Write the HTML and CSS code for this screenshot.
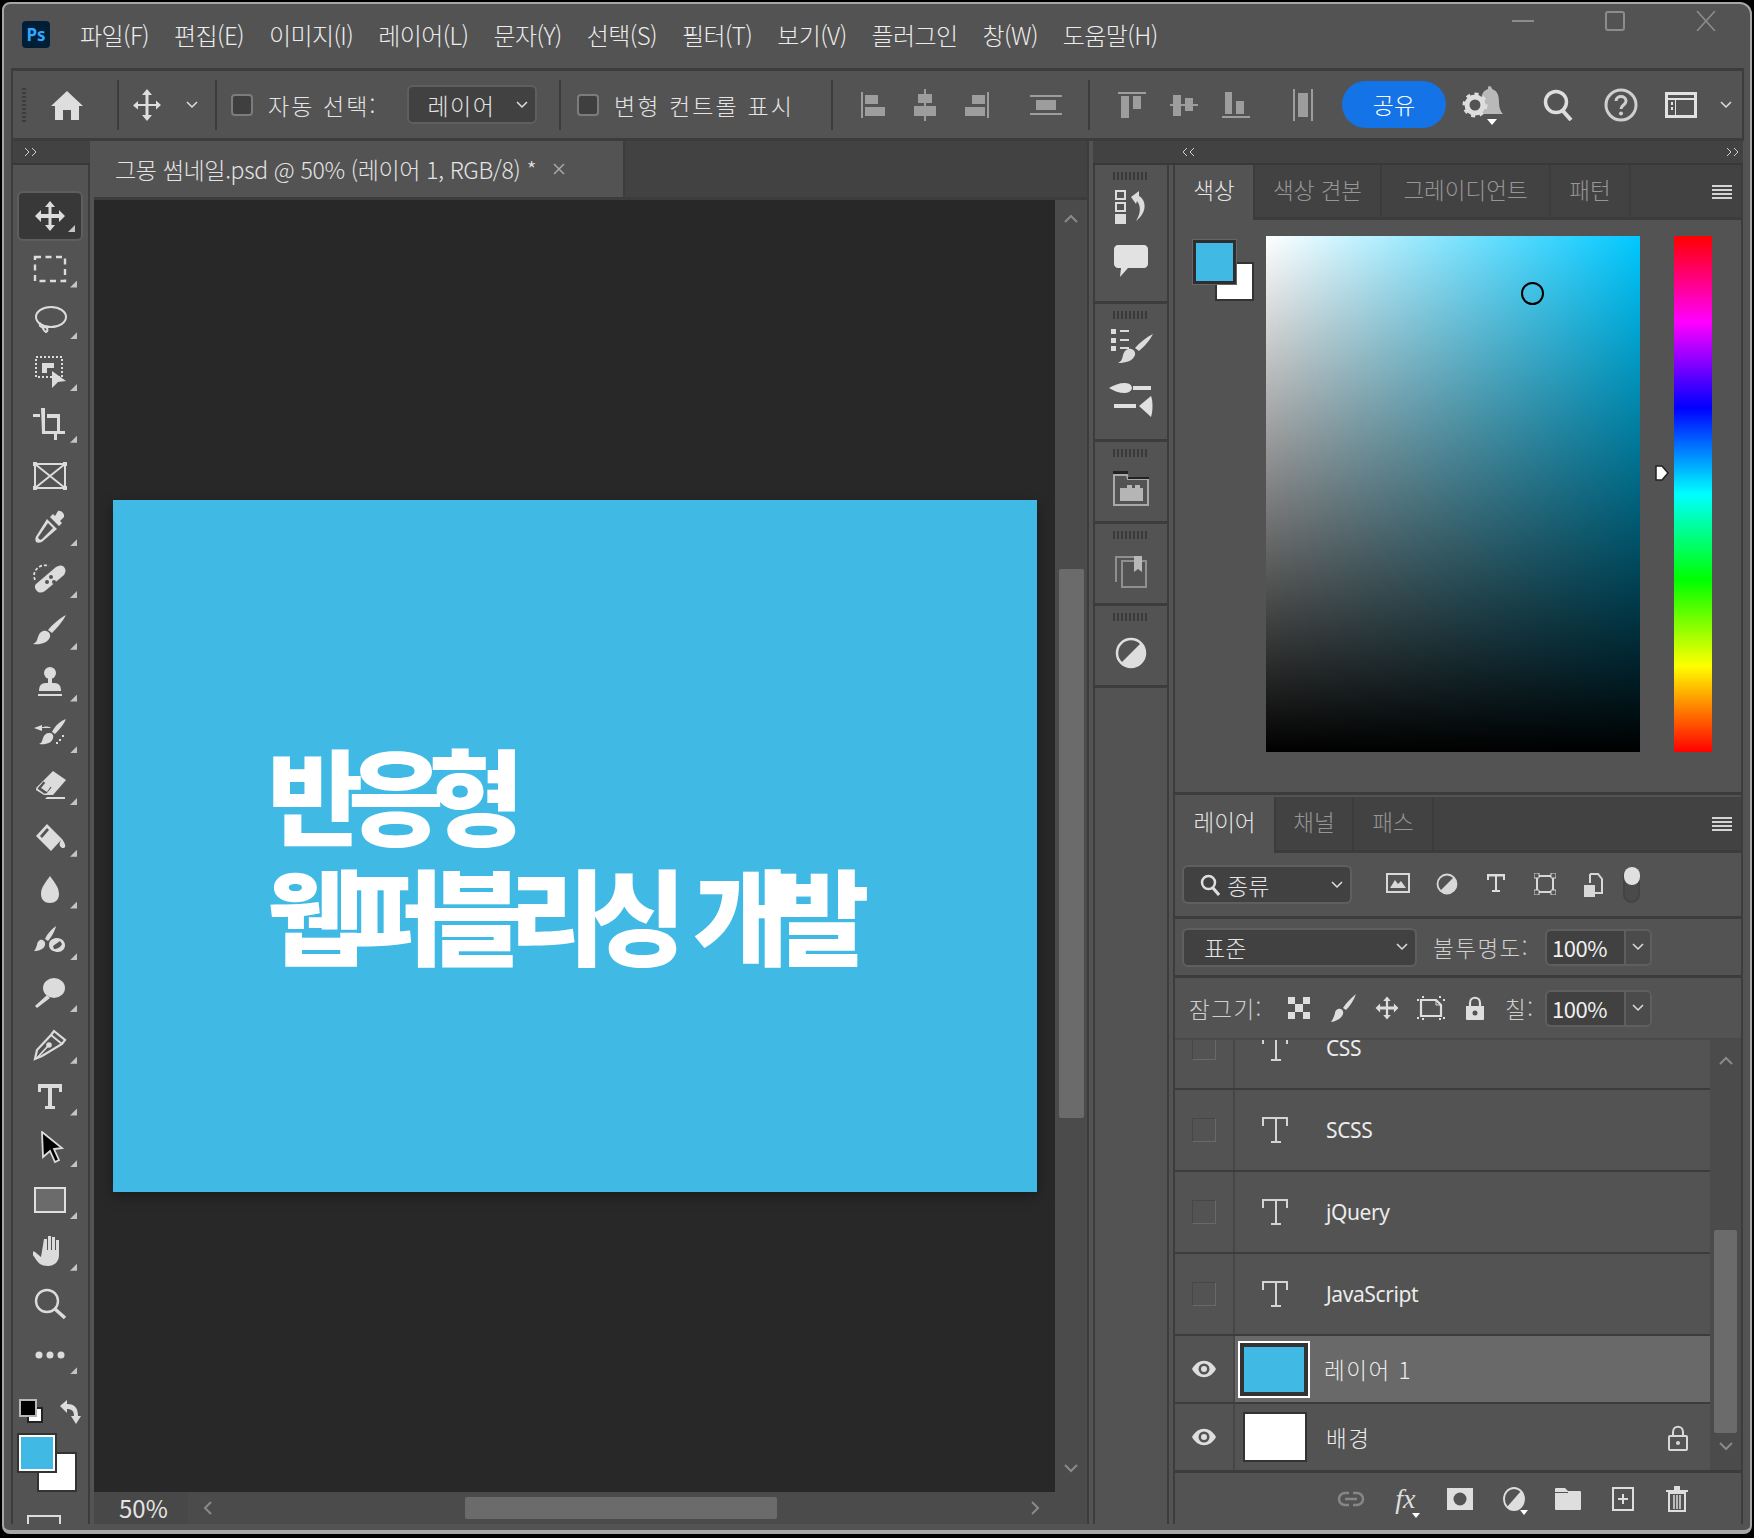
FILE: index.html
```html
<!DOCTYPE html>
<html lang="ko">
<head>
<meta charset="utf-8">
<title>Photoshop</title>
<link rel="stylesheet" href="styles.css">
</head>
<body>
<div class="window">
  <header class="titlebar">
    <div class="ps-logo">Ps</div>
    <nav class="menu">
      <span>파일(F)</span><span>편집(E)</span><span>이미지(I)</span><span>레이어(L)</span><span>문자(Y)</span><span>선택(S)</span><span>필터(T)</span><span>보기(V)</span><span>플러그인</span><span>창(W)</span><span>도움말(H)</span>
    </nav>
    <div class="winctl">
      <svg class="wc-min" width="22" height="4" viewBox="0 0 22 4"><path d="M0 2h22" stroke="#8c8c8c" stroke-width="2"/></svg>
      <svg class="wc-max" width="20" height="20" viewBox="0 0 20 20"><rect x="1" y="1" width="18" height="18" rx="2" fill="none" stroke="#8c8c8c" stroke-width="2"/></svg>
      <svg class="wc-close" width="20" height="20" viewBox="0 0 20 20"><path d="M1 0l18 20M19 0L1 20" stroke="#8c8c8c" stroke-width="1.6"/></svg>
    </div>
  </header>

  <section class="toolbar">
    <div class="tb-home">
      <div class="tb-grip"></div>
      <svg width="34" height="30" viewBox="0 0 34 30"><path d="M17 1L33 16h-4v14h-8v-10h-8v10H5V16H1z" fill="#dedede"/></svg>
    </div>
    <i class="sep"></i>
    <div class="tb-move">
      <svg width="30" height="34" viewBox="0 0 30 34"><path d="M15 1l5 6h-3.5v9H24v-3.5l5 4.500-5 4.500V18h-7.500v9H20l-5 6-5-6h3.500v-9H6v3.500L1 17.500l5-4.500V16h7.500V7H10z" fill="#dedede"/></svg>
      <svg class="chev" width="12" height="8" viewBox="0 0 12 8"><path d="M1 1l5 5 5-5" fill="none" stroke="#dedede" stroke-width="1.500"/></svg>
    </div>
    <i class="sep"></i>
    <div class="tb-auto">
      <i class="check"></i>
      <span class="tb-label">자동 선택:</span>
      <div class="select tb-select"><span>레이어</span><svg class="chev" width="12" height="8" viewBox="0 0 12 8"><path d="M1 1l5 5 5-5" fill="none" stroke="#dedede" stroke-width="1.500"/></svg></div>
    </div>
    <i class="sep"></i>
    <div class="tb-trans">
      <i class="check"></i>
      <span class="tb-label">변형 컨트롤 표시</span>
    </div>
    <i class="sep"></i>
    <div class="tb-aligns">
      <div class="ic"><svg width="26" height="26" viewBox="0 0 26 26" fill="#9d9d9d"><path d="M1 0h2v26H1z"/><path d="M5 3h13v9H5zM5 15h20v9H5z"/></svg></div>
      <div class="ic"><svg width="22" height="32" viewBox="0 0 22 32" fill="#9d9d9d"><path d="M10 0h2v32h-2z"/><path d="M4 5h14v9H4zM0 17h22v10H0z"/></svg></div>
      <div class="ic"><svg width="26" height="26" viewBox="0 0 26 26" fill="#9d9d9d"><path d="M23 0h2v26h-2z"/><path d="M8 3h13v9H8zM1 15h20v9H1z"/></svg></div>
      <div class="ic ic-far"><svg width="34" height="20" viewBox="0 0 34 20" fill="#9d9d9d"><path d="M1 0h32v2H1zM1 18h32v2H1zM7 5h20v10H7z"/></svg></div>
    </div>
    <i class="sep"></i>
    <div class="tb-dist">
      <div class="ic"><svg width="28" height="26" viewBox="0 0 28 26" fill="#9d9d9d"><path d="M0 0h28v2H0zM3 4h8v22H3zM15 4h8v13h-8z"/></svg></div>
      <div class="ic"><svg width="28" height="22" viewBox="0 0 28 22" fill="#9d9d9d"><path d="M0 10h28v2H0zM3 1h8v21H3zM15 4h8v13h-8z"/></svg></div>
      <div class="ic"><svg width="28" height="26" viewBox="0 0 28 26" fill="#9d9d9d"><path d="M0 24h28v2H0zM3 0h7v22H3zM14 9h8v13h-8z"/></svg></div>
      <div class="ic ic-far"><svg width="20" height="32" viewBox="0 0 20 32" fill="#9d9d9d"><path d="M0 0h2v32H0zM18 0h2v32h-2zM5 4h10v24H5z"/></svg></div>
    </div>
    <button class="share">공유</button>
    <div class="ic ic-bell">
      <svg width="44" height="40" viewBox="0 0 44 40"><path d="M27 1c2 0 3 2 3 3 6 2 7 7 7 14 0 5 2 9 4 11H15c2-2 4-6 4-11 0-7 1-12 7-14 0-1 0-3 1-3z" fill="#b9b9b9"/><circle cx="13" cy="20" r="8" fill="none" stroke="#dedede" stroke-width="5"/><circle cx="13" cy="20" r="11" fill="none" stroke="#dedede" stroke-width="3" stroke-dasharray="4 4.500"/><path d="M25 34h10l-5 6z" fill="#fff"/></svg>
    </div>
    <div class="ic ic-search"><svg width="30" height="32" viewBox="0 0 30 32"><circle cx="13" cy="13" r="10.500" fill="none" stroke="#dedede" stroke-width="3.500"/><path d="M20 22l8 9" stroke="#dedede" stroke-width="4"/></svg></div>
    <div class="ic ic-help"><svg width="34" height="34" viewBox="0 0 34 34"><circle cx="17" cy="17" r="15" fill="none" stroke="#cfcfcf" stroke-width="3"/><path d="M12 13c0-6 10-6 10 0 0 4-5 4-5 8" fill="none" stroke="#cfcfcf" stroke-width="3"/><circle cx="17" cy="25.500" r="2" fill="#cfcfcf"/></svg></div>
    <div class="ic ic-work"><svg width="32" height="26" viewBox="0 0 32 26"><rect x="1.500" y="1.500" width="29" height="23" fill="none" stroke="#e2e2e2" stroke-width="3"/><path d="M1 6h30v2H1zM6 10h2v3H6zM6 15h2v3H6z" fill="#e2e2e2"/><path d="M10 8h1v15h-1z" fill="#e2e2e2"/></svg></div>
    <div class="ic ic-wchev"><svg width="12" height="8" viewBox="0 0 12 8"><path d="M1 1l5 5 5-5" fill="none" stroke="#dedede" stroke-width="1.500"/></svg></div>
  </section>

  <div class="main">
    <aside class="left">
      <div class="collapse"><svg width="14" height="10" viewBox="0 0 14 10"><path d="M1 1l4 4-4 4M8 1l4 4-4 4" fill="none" stroke="#cfcfcf"/></svg></div>
      <div class="tools">
        <div class="grip"></div>
        <div class="toolgrid">
          <div class="tool tool-on more"><svg viewBox="0 0 34 34"><path d="M17 2l5 6h-3.500v7H26v-4l6 6-6 6v-4h-7.500v7H22l-5 6-5-6h3.500v-7H8v4l-6-6 6-6v4h7.500V8H12z"/></svg></div>
          <div class="tool more"><svg viewBox="0 0 34 34"><rect x="2" y="5" width="30" height="24" fill="none" stroke="currentColor" stroke-width="2.400" stroke-dasharray="6 4.500"/></svg></div>
          <div class="tool more"><svg viewBox="0 0 34 34" class="line"><ellipse cx="18" cy="14" rx="15" ry="10"/><path d="M8 20c-4 3 2 5 5 4 2 2 2 4 0 5-2-1-4-4-3-6"/></svg></div>
          <div class="tool more"><svg viewBox="0 0 34 34"><rect x="3" y="2" width="26" height="20" fill="none" stroke="currentColor" stroke-width="2" stroke-dasharray="2 2"/><path d="M9 8h12v5H14v5H9z"/><path d="M19 16l14 10-8 1-6 6z"/></svg></div>
          <div class="tool more"><svg viewBox="0 0 34 34"><path d="M8 1h4v23h20v3h-8v6h-3v-6H9zM0 7h7v3H0zM14 7h13v17h-3V11H14z" /></svg></div>
          <div class="tool"><svg viewBox="0 0 34 34" class="line"><rect x="2" y="5" width="30" height="24"/><path d="M2 5l30 24M32 5L2 29"/><path class="dots" d="M0 3h4v4H0zM30 3h4v4h-4zM0 27h4v4H0zM30 27h4v4h-4z"/></svg></div>
          <div class="tool more"><svg viewBox="0 0 34 34"><path d="M25 1c3-1 7 3 6 6l-4 4 2 2-3 3-9-9 3-3 2 2z"/><path d="M14 9l10 10L10 31c-2 2-5 2-7 1-1-2-1-5 1-7zM15 13L6 26c-1 1-1 2 0 3 1 1 2 1 3 0l11-11z" fill-rule="evenodd"/></svg></div>
          <div class="tool more"><svg viewBox="0 0 34 34"><path d="M3 22L23 5c3-2 6-2 8 0s2 5 0 8L12 29c-3 2-6 2-8 0s-3-5-1-7z"/><circle cx="18" cy="15" r="2" fill="#535353"/><circle cx="14" cy="20" r="2" fill="#535353"/><circle cx="21" cy="20" r="2" fill="#535353"/><path d="M2 18C-2 8 8 1 16 4" fill="none" stroke="currentColor" stroke-width="1.800" stroke-dasharray="3 2"/></svg></div>
          <div class="tool more"><svg viewBox="0 0 34 34"><path d="M33 1c-3 6-9 13-14 18l-4-3C20 10 27 4 33 1zM10 17c4-1 8 2 7 6-2 6-10 8-17 7 4-2 4-4 5-7 1-3 2-5 5-6z"/></svg></div>
          <div class="tool more"><svg viewBox="0 0 34 34"><circle cx="17" cy="7" r="6"/><path d="M15 11h4v7h-4zM13 17h8c3 0 5 1 6 3 1 2 1 4 1 5H6c0-1 0-3 1-5 1-2 3-3 6-3zM5 28h24v2H5z"/></svg></div>
          <div class="tool more"><svg viewBox="0 0 34 34"><path d="M33 2c-2 5-6 10-11 15l-3-2c3-6 8-11 14-13zM16 16c3 0 5 2 4 5-1 5-7 7-14 6 3-1 3-3 4-6 1-3 3-5 6-5zM1 11l8-3v6zM8 11c3-2 8-2 10 0" fill-rule="nonzero"/><path d="M26 22h2v2h-2zM29 18h2v2h-2zM23 25h2v2h-2z"/></svg></div>
          <div class="tool more"><svg viewBox="0 0 34 34"><path d="M20 2l13 9-13 15H12l-9-7z"/><path d="M3 19l10 7h-2L3 21zM14 28h18v2H12z"/><path d="M4.500 19.500l6-7 8 6-5 6H11z" fill="#535353"/><path d="M8 19l5-6 5 4-4 6z" fill="#dcdcdc"/></svg></div>
          <div class="tool more"><svg viewBox="0 0 34 34"><path d="M3 15L14 3l15 15-11 12zM29 18c2 3 4 6 3 8s-4 1-5-1 0-5 2-7z"/><path d="M7 15l7-8 2 2-7 8z" fill="#535353"/></svg></div>
          <div class="tool more"><svg viewBox="0 0 34 34"><path d="M17 3c4 6 9 11 9 18 0 6-4 9-9 9s-9-3-9-9c0-7 5-12 9-18z"/></svg></div>
          <div class="tool more"><svg viewBox="0 0 34 34"><path d="M23 2c-1 5-5 12-8 15l-3-2c2-5 7-10 11-13zM7 16c3-1 6 2 5 5-1 4-6 6-11 6 2-2 2-4 3-6 0-2 1-4 3-5z"/><path d="M24 14c4 0 8 3 8 7s-3 7-7 7-9-2-9-7 4-7 8-7zM27 17l-7 5 1 3c3 0 7-2 8-5z" fill-rule="evenodd"/></svg></div>
          <div class="tool more"><svg viewBox="0 0 34 34"><ellipse cx="21" cy="12" rx="11" ry="10"/><path d="M14 19l3 3L4 32l-2-2z"/></svg></div>
          <div class="tool more"><svg viewBox="0 0 34 34" class="line"><path d="M21 3l11 9-3 4L9 28 2 31l2-9L18 7z" stroke-width="2.200"/><path d="M18 7l11 9M4 30l11-12" stroke-width="1.800"/><circle cx="16" cy="17" r="1.800" fill="currentColor"/></svg></div>
          <div class="tool more"><svg viewBox="0 0 34 34"><path d="M5 4h24v8h-3V8H19v18h3v3H12v-3h3V8H8v4H5z"/></svg></div>
          <div class="tool more"><svg viewBox="0 0 34 34"><path d="M9 1l20 16-8 1 5 11-4 2-5-11-7 6z" fill="#000" stroke="#dcdcdc" stroke-width="1.800"/></svg></div>
          <div class="tool more"><svg viewBox="0 0 34 34"><rect x="2" y="5" width="30" height="24" fill="#6b6b6b" stroke="#e0e0e0" stroke-width="2"/></svg></div>
          <div class="tool more"><svg viewBox="0 0 34 34"><path d="M11 4h3v11h1V1h3v14h1V2h3v13h1V5h3v15c0 7-5 11-11 11-7 0-10-3-13-8l-3-4c-1-2 1-3 3-2l6 5z"/></svg></div>
          <div class="tool"><svg viewBox="0 0 34 34" class="line"><circle cx="14" cy="14" r="11" stroke-width="2.400"/><path d="M22 22l10 9" stroke-width="3.500"/></svg></div>
          <div class="tool more"><svg viewBox="0 0 34 34"><circle cx="6" cy="17" r="3.500"/><circle cx="17" cy="17" r="3.500"/><circle cx="28" cy="17" r="3.500"/></svg></div>
        </div>
        <div class="colors">
          <div class="mini">
            <svg width="24" height="24" viewBox="0 0 24 24"><rect x="9" y="9" width="14" height="14" fill="#fff" stroke="#222" stroke-width="2"/><rect x="1" y="1" width="16" height="16" fill="#000" stroke="#b8b8b8" stroke-width="2"/></svg>
            <svg width="22" height="26" viewBox="0 0 22 26"><path d="M1 7l7-6v4c7 0 11 3 11 12h3l-5 8-5-8h3c0-5-2-7-7-7v4z" fill="#dcdcdc"/></svg>
          </div>
          <div class="swatches">
            <i class="sw-bg"></i><i class="sw-fg"></i>
          </div>
          <div class="quick"><b></b></div>
        </div>
      </div>
    </aside>

    <section class="doc">
      <div class="tabs">
        <div class="doctab"><span>그몽 썸네일.psd @ 50% (레이어 1, RGB/8) *</span><svg width="14" height="14" viewBox="0 0 14 14"><path d="M2 2l10 10M12 2L2 12" stroke="#a8a8a8" stroke-width="1.500"/></svg></div>
      </div>
      <div class="doc-body">
        <div class="canvas">
          <div class="art">
            <p>반응형</p>
            <p>웹퍼블리싱 개발</p>
          </div>
        </div>
        <div class="vscroll">
          <svg class="sc-up" width="14" height="9" viewBox="0 0 14 9"><path d="M1 8l6-6 6 6" fill="none" stroke="#8a8a8a" stroke-width="2"/></svg>
          <div class="vthumb"></div>
          <svg class="sc-down" width="14" height="9" viewBox="0 0 14 9"><path d="M1 1l6 6 6-6" fill="none" stroke="#8a8a8a" stroke-width="2"/></svg>
        </div>
      </div>
      <div class="status">
        <div class="zoomval">50%</div>
        <div class="hscroll">
          <svg width="9" height="14" viewBox="0 0 9 14"><path d="M8 1L2 7l6 6" fill="none" stroke="#8a8a8a" stroke-width="2"/></svg>
          <div class="hthumb"></div>
          <svg width="9" height="14" viewBox="0 0 9 14"><path d="M1 1l6 6-6 6" fill="none" stroke="#8a8a8a" stroke-width="2"/></svg>
        </div>
      </div>
    </section>

    <aside class="dock">
      <div class="collapse dock-top"><svg width="14" height="10" viewBox="0 0 14 10"><path d="M6 1L2 5l4 4M13 1L9 5l4 4" fill="none" stroke="#cfcfcf"/></svg></div>
      <div class="dock-group g1">
        <div class="grip"></div>
        <div class="dock-ic"><svg width="36" height="36" viewBox="0 0 36 36" fill="#dcdcdc"><path d="M2 1h11v10H2zM4 3v6h7V3zM2 13h11v10H2zM4 15v6h7v-6zM2 25h11v10H2z" fill-rule="evenodd"/><path d="M18 8l8-6v5c7 4 9 16-3 25 5-8 5-15 1-20l-1 3z"/></svg></div>
        <div class="dock-ic"><svg width="34" height="32" viewBox="0 0 34 32" fill="#e2e2e2"><path d="M4 0h26c2 0 4 2 4 4v15c0 2-2 4-4 4H14l-8 9 1-9H4c-2 0-4-2-4-4V4c0-2 2-4 4-4z"/></svg></div>
      </div>
      <div class="dock-group g2">
        <div class="grip"></div>
        <div class="dock-ic"><svg width="44" height="36" viewBox="0 0 44 36" fill="#dcdcdc"><path d="M2 1h5v5H2zM2 10h5v5H2zM2 18h5v5H2zM11 2h9v2h-9zM11 11h9v2h-9zM11 19h9v2h-9z"/><path d="M44 6c-3 6-9 13-14 17l-4-3c5-6 12-11 18-14zM19 21c4-1 8 2 7 6-2 6-9 8-17 8 4-2 4-4 5-8 1-3 2-5 5-6z"/></svg></div>
        <div class="dock-ic"><svg width="44" height="34" viewBox="0 0 44 34" fill="#e0e0e0"><path d="M0 5c5-3 10-5 16-5 5 0 7 3 7 5s-3 5-7 5C10 10 5 8 0 5zM24 3h18v4H24zM5 21h22v4H5zM30 23l12-10c2 5 2 15 0 21z"/></svg></div>
      </div>
      <div class="dock-group g3">
        <div class="grip"></div>
        <div class="dock-ic"><svg width="36" height="36" viewBox="0 0 36 36"><path d="M1 4v30h34V8H15l-1-4z" fill="none" stroke="#a9a9a9" stroke-width="2"/><path d="M0 0h15v3H0zM15 6h21v2H15z" fill="#222"/><path d="M7 17h7v-3h5v3h3v-3h5v3h3v13H7z" fill="#b5b5b5"/></svg></div>
      </div>
      <div class="dock-group g3">
        <div class="grip"></div>
        <div class="dock-ic"><svg width="34" height="36" viewBox="0 0 34 36"><path d="M1 3h26v2H3v24H1zM7 7h26v28H7zM9 9v24h22V9z" fill="#8f8f8f" fill-rule="evenodd"/><path d="M20 3h8v16l-4-3-4 3z" fill="#b8b8b8"/></svg></div>
      </div>
      <div class="dock-group g3">
        <div class="grip"></div>
        <div class="dock-ic"><svg width="32" height="32" viewBox="0 0 32 32"><circle cx="16" cy="16" r="14" fill="none" stroke="#dedede" stroke-width="2.500"/><path d="M26 6A14 14 0 0 1 6 26z" fill="#dedede"/></svg></div>
      </div>
      <div class="dock-rest"></div>
    </aside>

    <aside class="panels">
      <div class="collapse panels-top"><svg width="14" height="10" viewBox="0 0 14 10"><path d="M1 1l4 4-4 4M8 1l4 4-4 4" fill="none" stroke="#cfcfcf"/></svg></div>
      <section class="color-panel">
        <div class="ptabs">
          <div class="ptab on w80">색상</div>
          <div class="ptab w128">색상 견본</div>
          <div class="ptab w169">그레이디언트</div>
          <div class="ptab w80">패턴</div>
          <svg class="hamb" width="20" height="14" viewBox="0 0 20 14"><path d="M0 1h20M0 5h20M0 9h20M0 13h20" stroke="#d4d4d4" stroke-width="2"/></svg>
        </div>
        <div class="color-body">
          <div class="swatch-lg"><i class="cbg"></i><i class="cfg"></i></div>
          <div class="picker"><i class="picker-dot"></i></div>
          <div class="huewrap"><svg class="hue-mark" width="14" height="16" viewBox="0 0 14 16"><path d="M1 1h6l6 7-6 7H1z" fill="#fff" stroke="#222" stroke-width="1.500"/></svg><div class="hue"></div></div>
        </div>
      </section>
      <section class="layers-panel">
        <div class="ptabs ltabs">
          <div class="ptab on w101">레이어</div>
          <div class="ptab w78">채널</div>
          <div class="ptab w80">패스</div>
          <svg class="hamb" width="20" height="14" viewBox="0 0 20 14"><path d="M0 1h20M0 5h20M0 9h20M0 13h20" stroke="#d4d4d4" stroke-width="2"/></svg>
        </div>
        <div class="lrow lfilter">
          <div class="select sel-filter">
            <svg width="20" height="22" viewBox="0 0 20 22"><circle cx="8.500" cy="8.500" r="6.500" fill="none" stroke="#dedede" stroke-width="2.500"/><path d="M13 14l6 7" stroke="#dedede" stroke-width="3"/></svg>
            <span>종류</span>
            <svg class="chev" width="12" height="8" viewBox="0 0 12 8"><path d="M1 1l5 5 5-5" fill="none" stroke="#dedede" stroke-width="1.500"/></svg>
          </div>
          <div class="filter-icons">
            <div class="fi"><svg width="24" height="20" viewBox="0 0 24 20"><rect x="1" y="1" width="22" height="18" fill="none" stroke="#d8d8d8" stroke-width="2"/><path d="M4 15l5-8 3 4 3-3 5 7z" fill="#d8d8d8"/></svg></div>
            <div class="fi"><svg width="22" height="22" viewBox="0 0 22 22"><circle cx="11" cy="11" r="9.500" fill="none" stroke="#d8d8d8" stroke-width="1.800"/><path d="M18 4A9.500 9.500 0 0 1 4 18z" fill="#d8d8d8"/></svg></div>
            <div class="fi"><svg width="20" height="20" viewBox="0 0 20 20"><path d="M1 1h18v6h-2V3.500h-6V17h3v2H6v-2h3V3.500H3V7H1z" fill="#dedede"/></svg></div>
            <div class="fi"><svg width="22" height="22" viewBox="0 0 22 22"><path d="M3 3h16v16H3z" fill="none" stroke="#d8d8d8" stroke-width="2"/><path d="M0 0h5v5H0zM17 0h5v5h-5zM0 17h5v5H0zM17 17h5v5h-5z" fill="#535353" stroke="#d8d8d8"/></svg></div>
            <div class="fi"><svg width="20" height="24" viewBox="0 0 20 24"><path d="M7 1h8l4 5v14h-7" fill="none" stroke="#d8d8d8" stroke-width="2"/><path d="M7 1v9" stroke="#d8d8d8" stroke-width="2"/><path d="M1 12h11v12H1z" fill="#d8d8d8"/></svg></div>
          </div>
          <div class="toggle"><i></i></div>
        </div>
        <div class="lrow lblend">
          <div class="select sel-blend"><span>표준</span><svg class="chev" width="12" height="8" viewBox="0 0 12 8"><path d="M1 1l5 5 5-5" fill="none" stroke="#dedede" stroke-width="1.500"/></svg></div>
          <span class="llabel l-op">불투명도:</span>
          <div class="num"><span>100%</span><em><svg width="12" height="8" viewBox="0 0 12 8"><path d="M1 1l5 5 5-5" fill="none" stroke="#dedede" stroke-width="1.500"/></svg></em></div>
        </div>
        <div class="lrow llock">
          <span class="llabel l-lock">잠그기:</span>
          <div class="li"><svg width="22" height="22" viewBox="0 0 22 22"><path d="M0 0h22v22H0z" fill="#dedede"/><path d="M7 0h8v7H7zM0 7h7v8H0zM15 7h7v8h-7zM7 15h8v7H7z" fill="#535353"/></svg></div>
          <div class="li"><svg width="26" height="28" viewBox="0 0 26 28"><path d="M26 0c-2 6-6 12-10 16l-3-2C16 9 21 4 26 0zM8 15c3-1 6 1 5 5-1 4-6 7-12 8 2-3 3-5 4-9 0-2 1-3 3-4z" fill="#dedede"/></svg></div>
          <div class="li"><svg width="26" height="26" viewBox="0 0 34 34"><path d="M17 2l5 6h-3.500v7H26v-4l6 6-6 6v-4h-7.500v7H22l-5 6-5-6h3.500v-7H8v4l-6-6 6-6v4h7.500V8H12z" fill="#dedede"/></svg></div>
          <div class="li"><svg width="28" height="24" viewBox="0 0 28 24"><path d="M4 4h15l5 5v11H4z" fill="none" stroke="#dedede" stroke-width="2.200"/><path d="M19 4v5h5" fill="none" stroke="#dedede"/><path d="M0 3h2v2H0zM26 3h2v2h-2zM0 21h2v2H0zM26 21h2v2h-2zM5 0h2v2H5zM22 0h2v2h-2zM5 22h2v2H5zM22 22h2v2h-2z" fill="#dedede"/></svg></div>
          <div class="li"><svg width="20" height="24" viewBox="0 0 20 24"><path d="M5 10V7c0-7 10-7 10 0v3" fill="none" stroke="#dedede" stroke-width="2.200"/><path d="M1 10h18v13a1 1 0 0 1-1 1H2a1 1 0 0 1-1-1z" fill="#dedede"/><circle cx="10" cy="17" r="2.500" fill="#535353"/></svg></div>
          <span class="llabel l-fill">칠:</span>
          <div class="num"><span>100%</span><em><svg width="12" height="8" viewBox="0 0 12 8"><path d="M1 1l5 5 5-5" fill="none" stroke="#dedede" stroke-width="1.500"/></svg></em></div>
        </div>
        <div class="llist">
          <div class="rows">
            <div class="layer tall first">
              <div class="vis"><i class="box"></i></div>
              <div class="lmain"><svg class="t" width="28" height="28" viewBox="0 0 28 28"><path d="M1 1h26v9h-2V3h-9v22h4v2H10v-2h4V3H3v7H1z" fill="#d4d4d4"/></svg><span>CSS</span></div>
            </div>
            <div class="layer tall">
              <div class="vis"><i class="box"></i></div>
              <div class="lmain"><svg class="t" width="28" height="28" viewBox="0 0 28 28"><path d="M1 1h26v9h-2V3h-9v22h4v2H10v-2h4V3H3v7H1z" fill="#d4d4d4"/></svg><span>SCSS</span></div>
            </div>
            <div class="layer tall">
              <div class="vis"><i class="box"></i></div>
              <div class="lmain"><svg class="t" width="28" height="28" viewBox="0 0 28 28"><path d="M1 1h26v9h-2V3h-9v22h4v2H10v-2h4V3H3v7H1z" fill="#d4d4d4"/></svg><span>jQuery</span></div>
            </div>
            <div class="layer tall">
              <div class="vis"><i class="box"></i></div>
              <div class="lmain"><svg class="t" width="28" height="28" viewBox="0 0 28 28"><path d="M1 1h26v9h-2V3h-9v22h4v2H10v-2h4V3H3v7H1z" fill="#d4d4d4"/></svg><span>JavaScript</span></div>
            </div>
            <div class="layer short sel">
              <div class="vis"><svg width="26" height="18" viewBox="0 0 26 18"><path d="M1 9c6-11 18-11 24 0-6 11-18 11-24 0z" fill="#dedede"/><circle cx="13" cy="9" r="5.500" fill="#535353"/><circle cx="13" cy="9" r="3" fill="#dedede"/></svg></div>
              <div class="lmain"><div class="thumb thumb-blue"><i></i></div><span class="kr">레이어 1</span></div>
            </div>
            <div class="layer short">
              <div class="vis"><svg width="26" height="18" viewBox="0 0 26 18"><path d="M1 9c6-11 18-11 24 0-6 11-18 11-24 0z" fill="#dedede"/><circle cx="13" cy="9" r="5.500" fill="#535353"/><circle cx="13" cy="9" r="3" fill="#dedede"/></svg></div>
              <div class="lmain"><div class="thumb"><i class="white"></i></div><span class="kr">배경</span><svg class="row-lock" width="20" height="26" viewBox="0 0 20 26"><path d="M5 11V7c0-7 10-7 10 0v4" fill="none" stroke="#d8d8d8" stroke-width="2"/><rect x="1" y="11" width="18" height="14" rx="1" fill="none" stroke="#d8d8d8" stroke-width="2"/><circle cx="10" cy="18" r="2" fill="#d8d8d8"/></svg></div>
            </div>
          </div>
          <div class="lscroll">
            <svg width="14" height="9" viewBox="0 0 14 9"><path d="M1 8l6-6 6 6" fill="none" stroke="#8a8a8a" stroke-width="2"/></svg>
            <div class="lthumb"></div>
            <svg width="14" height="9" viewBox="0 0 14 9"><path d="M1 1l6 6 6-6" fill="none" stroke="#8a8a8a" stroke-width="2"/></svg>
          </div>
        </div>
        <div class="lbottom">
          <div class="bi"><svg width="28" height="16" viewBox="0 0 28 16"><path d="M12 2H8a6 6 0 0 0 0 12h4M16 2h4a6 6 0 0 1 0 12h-4M8 8h12" fill="none" stroke="#868686" stroke-width="2.500"/></svg></div>
          <div class="bi"><span class="fx">fx</span><i class="tri"></i></div>
          <div class="bi"><svg width="26" height="22" viewBox="0 0 26 22"><path d="M0 0h26v22H0z" fill="#dedede"/><circle cx="13" cy="11" r="6.500" fill="#535353"/></svg></div>
          <div class="bi"><svg width="22" height="24" viewBox="0 0 22 24"><ellipse cx="11" cy="12" rx="10" ry="11" fill="none" stroke="#dedede" stroke-width="1.800"/><path d="M18 4A10 11 0 0 1 4 20z" fill="#dedede"/></svg><i class="tri"></i></div>
          <div class="bi"><svg width="26" height="22" viewBox="0 0 26 22"><path d="M1 0h9l3 3h12a1 1 0 0 1 1 1v17a1 1 0 0 1-1 1H1a1 1 0 0 1-1-1V1a1 1 0 0 1 1-1z" fill="#dedede"/><path d="M0 4h13v1H0z" fill="#535353"/></svg></div>
          <div class="bi"><svg width="22" height="24" viewBox="0 0 22 24"><rect x="1" y="1" width="20" height="22" fill="none" stroke="#dedede" stroke-width="2"/><path d="M11 7v10M6 12h10" stroke="#dedede" stroke-width="2"/></svg></div>
          <div class="bi"><svg width="22" height="26" viewBox="0 0 22 26"><path d="M0 4h22v2H0zM8 0h6v4H8z" fill="#dedede"/><path d="M3 7h16v18H3z" fill="none" stroke="#dedede" stroke-width="2"/><path d="M8 9v14M11 9v14M14 9v14" stroke="#dedede" stroke-width="1.500"/></svg></div>
        </div>
      </section>
    </aside>
  </div>
</div>
</body>
</html>
```
FILE: styles.css
```css
* { box-sizing: border-box; }
html, body { margin: 0; padding: 0; }
body {
  width: 1754px;
  height: 1538px;
  overflow: hidden;
  background: #000;
  font-family: "Noto Sans CJK KR", "Noto Sans", sans-serif;
  font-weight: 300;
  color: #e4e4e4;
}
.window {
  width: 1750px;
  height: 1532px;
  margin: 2px 0 0 2px;
  padding: 0 6px 0 7px;
  background: #535353;
  border: 2px solid #a6a6a6;
  border-bottom-width: 4px;
  border-radius: 8px 12px 8px 8px;
  overflow: hidden;
}
svg { display: block; flex: none; }

/* title bar */
.titlebar { height: 64px; display: flex; align-items: center; }
.ps-logo {
  width: 28px; height: 27px; margin: -4px 30px 0 11px;
  background: #001e36; border-radius: 4px;
  color: #31a8ff; font: 700 17px/27px "Noto Sans", sans-serif; text-align: center;
}
.menu { display: flex; gap: 25px; font-size: 24px; line-height: 32px; margin-top: -2px; letter-spacing: -0.6px; color: #ececec; }
.winctl { margin-left: auto; display: flex; align-items: center; height: 100%; padding-bottom: 30px; padding-right: 28px; }
.wc-max { margin: 0 71px; }
.wc-min { margin-top: 0; }

/* options toolbar */
.toolbar {
  height: 73px; display: flex; align-items: center;
  border: solid #3c3c3c; border-width: 3px 2px;
}
.sep { flex: none; width: 2px; height: 50px; background: #3c3c3c; }
.tb-home { width: 104px; height: 100%; display: flex; align-items: center; gap: 24px; padding-left: 9px; }
.tb-grip { width: 4px; height: 34px; background: repeating-linear-gradient(to bottom, #3d3d3d 0 2px, transparent 2px 4px); }
.tb-move { width: 96px; display: flex; align-items: center; padding-left: 13px; gap: 24px; }
.tb-auto { width: 342px; display: flex; align-items: center; padding-left: 14px; }
.tb-trans { width: 270px; display: flex; align-items: center; padding-left: 16px; }
.check { flex: none; width: 22px; height: 22px; border: 2px solid #7c7c7c; border-radius: 4px; background: #3f3f3f; }
.tb-label { font-size: 23px; letter-spacing: 2.1px; margin-left: 15px; white-space: nowrap; line-height: 30px; }
.select {
  display: flex; align-items: center;
  background: #414141; border: 2px solid #5f5f5f; border-radius: 6px;
  font-size: 23px; line-height: 30px;
}
.tb-select { width: 130px; height: 39px; margin-left: 30px; padding-left: 18px; letter-spacing: 1.500px; }
.select .chev { margin-left: auto; margin-right: 7px; }
.ic { flex: none; width: 52px; height: 52px; display: flex; align-items: center; justify-content: center; }
.ic-far { margin-left: 17px; }
.tb-aligns { width: 255px; display: flex; padding-left: 14px; }
.tb-dist { width: 252px; display: flex; padding-left: 16px; }
.tb-dist .ic-far { margin-left: 15px; }
.share {
  flex: none; width: 104px; height: 47px; border: 0; border-radius: 24px;
  background: #1473e6; color: #fff; font: 300 23px/47px "Noto Sans CJK KR", sans-serif; padding: 0;
}
.ic-bell { margin-left: 12px; }
.ic-search { margin-left: 22px; }
.ic-help { margin-left: 11px; }
.ic-work { margin-left: 8px; }
.ic-wchev { margin-left: 5px; width: 28px; }

/* main */
.main { height: 1383px; display: flex; }
.collapse { height: 24px; background: #424242; border-bottom: 2px solid #383838; display: flex; align-items: center; padding: 0 11px; }
.grip {
  width: 40px; height: 8px; margin: 7px auto 0;
  background: repeating-linear-gradient(to right, #3a3a3a 0 2px, transparent 2px 4px);
}

/* tools */
.left { width: 79px; flex: none; border-left: 2px solid #3c3c3c; display: flex; flex-direction: column; }
.tools { flex: 1; border-right: 2px solid #3c3c3c; display: flex; flex-direction: column; overflow: hidden; width: 77px; }
.toolgrid { display: grid; grid-auto-rows: 51.75px; margin-top: 19px; }
.tool { position: relative; height: 51.75px; margin-left: 4px; width: 66px; display: flex; align-items: center; justify-content: center; color: #dcdcdc; }
.tool svg { width: 34px; height: 34px; fill: currentColor; }
.tool svg.line { fill: none; stroke: currentColor; stroke-width: 2; }
.tool svg.line .dots { fill: currentColor; stroke: none; }
.tool-on { background: #383838; border: 2px solid #5e5e5e; border-radius: 6px; height: 50px; }
.more::after {
  content: ""; position: absolute; right: 6px; bottom: 7px; width: 7px; height: 7px;
  background: #c4c4c4; clip-path: polygon(100% 0, 100% 100%, 0 100%);
}
.colors { padding-left: 4px; margin-top: 18px; }
.mini { display: flex; justify-content: space-between; padding: 0 7px 0 2px; }
.swatches { position: relative; height: 60px; margin-top: 8px; }
.sw-fg, .sw-bg { position: absolute; width: 40px; height: 40px; }
.sw-bg { left: 20px; top: 19px; background: #fff; border: 2px solid #333; }
.sw-fg { left: 0; top: 0; background: #40bae5; border: 2px solid #fff; outline: 2px solid #333; outline-offset: 0; left: 2px; top: 2px; width: 36px; height: 36px; }
.quick { margin: 22px 0 0 10px; width: 34px; height: 20px; border: 2px solid #dcdcdc; }
.quick b { display: block; }

/* document */
.doc { width: 995px; margin-left: 4px; flex: none; display: flex; flex-direction: column; border-right: 2px solid #3c3c3c; }
.tabs { height: 59px; flex: none; background: #424242; border-bottom: 3px solid #3c3c3c; display: flex; }
.doctab {
  width: 531px; background: #535353; display: flex; align-items: center;
  padding-left: 21px; font-size: 23px; letter-spacing: -0.35px; gap: 16px; white-space: nowrap; border-right: 2px solid #3c3c3c;
}
.doc-body { flex: 1; display: flex; min-height: 0; }
.canvas { flex: 1; background: #282828; display: flex; align-items: center; justify-content: center; }
.art {
  width: 924px; height: 692px; background: #40bae5; box-shadow: 0 4px 12px rgba(0,0,0,.35);
  padding: 233px 0 0 155px; color: #fff;
}
.art p {
  margin: 0; height: 120px; white-space: nowrap; font-size: 104px; line-height: 120px; font-weight: 900;
  letter-spacing: -15px; transform-origin: left center; word-spacing: 8px;
}
.vscroll { width: 32px; flex: none; background: #4b4b4b; display: flex; flex-direction: column; align-items: center; padding-top: 14px; }
.vthumb { width: 25px; height: 549px; background: #6b6b6b; border-radius: 2px; margin-top: 346px; }
.sc-down { margin-top: 346px; }
.status { height: 32px; flex: none; display: flex; background: #535353; border-top: 0; }
.zoomval { width: 94px; background: #484848; font-size: 24px; line-height: 32px; padding-left: 25px; font-weight: 400; }
.hscroll { flex: 1; display: flex; align-items: center; padding-left: 15px; background: #4b4b4b; }
.hthumb { width: 312px; height: 22px; background: #6b6b6b; border-radius: 2px; margin-left: 253px; }
.hscroll svg:last-child { margin-left: 254px; }

/* dock */
.dock { width: 76px; margin-left: 4px; flex: none; display: flex; flex-direction: column; }
.dock-top { justify-content: flex-end; padding: 0 0 0 0; width: 76px; }
.dock-top svg { margin-right: -26px; position: relative; z-index: 2; }
.dock-group { border-bottom: 3px solid #3c3c3c; border-left: 2px solid #3c3c3c; border-right: 2px solid #3c3c3c; }
.g1 { height: 139px; }
.g2 { height: 138px; }
.g3 { height: 82px; }
.dock-ic { display: flex; justify-content: center; align-items: center; height: 54px; }
.g1 .dock-ic:first-of-type { margin-top: 5px; }
.g3 .dock-ic { height: 60px; margin-top: 2px; }
.dock-group .grip { width: 36px; }
.dock-rest { flex: 1; border-left: 2px solid #3c3c3c; border-right: 2px solid #3c3c3c; }

/* panels */
.panels { width: 570px; margin-left: 4px; flex: none; display: flex; flex-direction: column; border-right: 2px solid #3c3c3c; border-left: 2px solid #3c3c3c; }
.panels-top { justify-content: flex-end; padding-right: 3px; margin-left: -6px; margin-right: -2px; width: auto; }
.ptabs { height: 55px; flex: none; display: flex; background: #424242; border-bottom: 3px solid #3c3c3c; align-items: stretch; position: relative; }
.ptab { font-size: 22.500px; line-height: 48px; text-align: center; color: #969696; border-right: 2px solid #3c3c3c; white-space: nowrap; }
.ptab.on { background: #535353; color: #e6e6e6; margin-bottom: -3px; }
.w80 { width: 80px; } .w128 { width: 127px; } .w169 { width: 169px; } .w101 { width: 101px; } .w78 { width: 78px; }
.hamb { position: absolute; right: 9px; top: 20px; }
.color-panel { height: 630px; flex: none; display: flex; flex-direction: column; border-bottom: 3px solid #3c3c3c; }
.color-body { flex: 1; display: flex; padding: 16px 0 0 18px; }
.swatch-lg { position: relative; width: 73px; height: 62px; margin-top: 4px; flex: none; }
.cfg, .cbg { position: absolute; display: block; }
.cbg { left: 22px; top: 22px; width: 39px; height: 39px; background: #fff; border: 2px solid #333; }
.cfg { left: 0; top: 0; width: 43px; height: 44px; background: #40bae5; border: 3px solid #fff; outline: 3px solid #2e2e2e; outline-offset: -3px; box-shadow: 0 0 0 1px #666; }
.picker {
  position: relative; width: 374px; height: 516px; flex: none;
  background: linear-gradient(to top, #000, rgba(0,0,0,0)), linear-gradient(to right, #fff, #00c8ff);
}
.picker-dot { position: absolute; left: 255px; top: 46px; width: 23px; height: 23px; border-radius: 50%; border: 2px solid #000; box-shadow: inset 0 0 0 0 #fff; }
.huewrap { position: relative; margin-left: 34px; width: 38px; height: 516px; flex: none; }
.hue {
  width: 38px; height: 516px;
  background: linear-gradient(to bottom, #f00 0, #f0f 16.66%, #00f 33.33%, #0ff 50%, #0f0 66.66%, #ff0 83.33%, #f00 100%);
}
.hue-mark { position: absolute; left: -19px; top: 229px; }
.layers-panel { flex: 1; display: flex; flex-direction: column; min-height: 0; margin-top: 2px; }
.ltabs { height: 56px; }
.lrow { flex: none; display: flex; align-items: center; border-bottom: 3px solid #3c3c3c; padding-left: 7px; }
.lfilter { height: 66px; }
.sel-filter { width: 170px; height: 39px; padding-left: 16px; gap: 7px; font-size: 23px; }
.filter-icons { display: flex; margin-left: 22px; }
.fi { width: 48.750px; display: flex; justify-content: center; }
.toggle { width: 17px; height: 36px; margin-left: 5px; border: 2px solid #444; border-radius: 9px; background: #4a4a4a; position: relative; }
.toggle i { position: absolute; left: -1px; top: -2px; width: 16px; height: 18px; border-radius: 8px; background: #e0e0e0; }
.lblend { height: 59px; }
.sel-blend { width: 235px; height: 39px; padding-left: 20px; font-size: 23px; }
.llabel { font-size: 22.500px; letter-spacing: 1.500px; white-space: nowrap; color: #cfcfcf; }
.l-op { margin-left: 16px; width: 112px; }
.num { width: 107px; height: 37px; display: flex; border: 2px solid #5f5f5f; border-radius: 6px; background: #414141; font-size: 22px; line-height: 33px; overflow: hidden; }
.num span { width: 77px; padding-left: 5px; color: #f0f0f0; font-weight: 400; letter-spacing: -.5px; }
.num em { flex: 1; border-left: 2px solid #5f5f5f; display: flex; align-items: center; justify-content: center; background: #4b4b4b; }
.llock { height: 62px; border-bottom: 0; padding-left: 14px; border-bottom: 2px solid #4a4a4a; }
.l-lock { width: 88px; }
.li { width: 44px; display: flex; justify-content: center; }
.l-fill { margin-left: 8px; width: 40px; }
.llist { height: 433px; flex: none; display: flex; overflow: hidden; border-bottom: 3px solid #3c3c3c; }
.rows { flex: 1; overflow: hidden; }
.layer { display: flex; border-bottom: 2px solid #3c3c3c; }
.tall { height: 82px; }
.first { margin-top: -32px; }
.short { height: 68px; }
.vis { width: 60px; flex: none; border-right: 2px solid #474747; display: flex; align-items: center; justify-content: center; }
.box { width: 24px; height: 24px; border: 1.500px solid; border-color: #474747 #696969 #696969 #474747; }
.lmain { flex: 1; display: flex; align-items: center; position: relative; font-size: 21px; color: #ececec; font-family: "Noto Sans", sans-serif; font-weight: 400; letter-spacing: -.4px; }
.t { margin-left: 26px; margin-right: 37px; }
.sel .lmain { background: #696969; }
.thumb { width: 64px; height: 50px; margin-left: 8px; border: 2px solid #333; background: #333; flex: none; }
.thumb i { display: block; width: 100%; height: 100%; background: #fff; }
.thumb-blue { margin-left: 3px; width: 72px; height: 57px; border: 2px solid #fff; padding: 4px; background: #333; margin-right: -5px; }
.thumb-blue i { background: #40bae5; }
.kr { margin-left: 19px; font-family: "Noto Sans CJK KR", sans-serif; font-weight: 300; font-size: 22.500px; letter-spacing: 1.500px; }
.row-lock { position: absolute; right: 22px; top: 21px; }
.lscroll { width: 31px; flex: none; background: #4b4b4b; display: flex; flex-direction: column; align-items: center; padding-top: 16px; }
.lthumb { width: 23px; height: 203px; background: #6b6b6b; margin-top: 165px; border-radius: 2px; }
.lscroll svg:last-child { margin-top: 9px; }
.lbottom { flex: 1; display: flex; justify-content: flex-end; align-items: center; padding-right: 37px; }
.bi { width: 54.300px; display: flex; justify-content: center; position: relative; }
.fx { font: italic 400 28px/30px "Liberation Serif", serif; color: #dedede; }
.tri { position: absolute; right: 13px; bottom: -4px; width: 0; height: 0; border: 4px solid transparent; border-top: 5px solid #fff; border-bottom: 0; }
```
